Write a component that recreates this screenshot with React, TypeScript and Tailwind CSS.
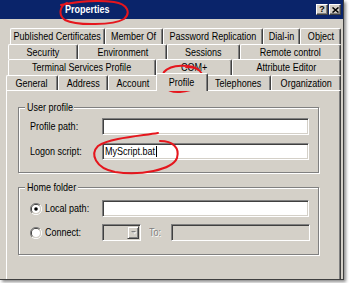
import React from "react";

type TabDef = { label: string; w: string; selected?: boolean };

const row1: TabDef[] = [
  { label: "Published Certificates", w: "w-[95px]" },
  { label: "Member Of", w: "w-[58px]" },
  { label: "Password Replication", w: "w-[100px]" },
  { label: "Dial-in", w: "w-[37px]" },
  { label: "Object", w: "w-[41px]" },
];
const row2: TabDef[] = [
  { label: "Security", w: "w-[70px]" },
  { label: "Environment", w: "w-[89px]" },
  { label: "Sessions", w: "w-[73px]" },
  { label: "Remote control", w: "w-[101px]" },
];
const row3: TabDef[] = [
  { label: "Terminal Services Profile", w: "w-[148px]" },
  { label: "COM+", w: "w-[76px]" },
  { label: "Attribute Editor", w: "w-[109px]" },
];
const row4: TabDef[] = [
  { label: "General", w: "w-[52px]" },
  { label: "Address", w: "w-[50px]" },
  { label: "Account", w: "w-[50px]" },
  { label: "Profile", w: "w-[52px]", selected: true },
  { label: "Telephones", w: "w-[65px]" },
  { label: "Organization", w: "w-[70px]" },
];

function N({ children, className = "" }: { children: React.ReactNode; className?: string }) {
  return <span className={`inline-block whitespace-nowrap scale-x-[0.82] ${className}`}>{children}</span>;
}

function Tab({ t }: { t: TabDef }) {
  if (t.selected) {
    return (
      <div
        className={`${t.w} relative z-10 -mx-[2px] -mt-[2px] flex h-[18px] shrink-0 items-start justify-center rounded-t-[2px] border-l border-t border-r border-white border-r-[#404040] bg-[#d4d0c8] pt-[1px] leading-[14px] shadow-[inset_-1px_0_#808080]`}
      >
        <N className="origin-center">{t.label}</N>
      </div>
    );
  }
  return (
    <div
      className={`${t.w} flex h-full shrink-0 items-start justify-center rounded-t-[2px] border-l border-t border-r border-white border-r-[#404040] bg-[#d4d0c8] leading-[14px] shadow-[inset_-1px_0_#808080]`}
    >
      <N className="origin-center">{t.label}</N>
    </div>
  );
}

function Input({ w, disabled, children }: { w: string; disabled?: boolean; children?: React.ReactNode }) {
  return (
    <div
      className={`${w} h-[17px] shrink-0 border border-[#808080] border-b-white border-r-white shadow-[inset_1px_1px_#404040,inset_-1px_-1px_#d4d0c8] ${disabled ? "bg-[#d4d0c8]" : "bg-white"} flex items-center pl-[2px] leading-none`}
    >
      {children}
    </div>
  );
}

function Radio({ checked }: { checked?: boolean }) {
  return (
    <svg width="12" height="12" viewBox="0 0 12 12" className="shrink-0">
      <path d="M10 2 A5.5 5.5 0 0 0 2 10" stroke="#808080" strokeWidth="1" fill="none" />
      <path d="M9.3 2.7 A4.5 4.5 0 0 0 2.7 9.3" stroke="#404040" strokeWidth="1" fill="none" />
      <path d="M2 10 A5.5 5.5 0 0 0 10 2" stroke="#ffffff" strokeWidth="1" fill="none" />
      <circle cx="6" cy="6" r="4" fill="#ffffff" />
      <path d="M9.3 2.7 A4.5 4.5 0 0 1 2.7 9.3" stroke="#d4d0c8" strokeWidth="1" fill="none" />
      {checked && <circle cx="6" cy="6" r="1.8" fill="#000" />}
    </svg>
  );
}

export default function App() {
  return (
    <div className="relative h-[283px] w-[349px] overflow-hidden bg-white font-['Liberation_Sans',Arial,sans-serif] text-[11px] text-black">
      <div className="flex h-[280px] w-[344px] flex-col overflow-hidden border-b border-r border-[#404040] bg-[#d4d0c8] shadow-[2px_2px_3px_rgba(0,0,0,0.45)]">
        {/* Title bar */}
        <div className="flex h-[19px] shrink-0 items-center bg-[#0a246a] pl-[65px] pr-[2px]">
          <N className="origin-left font-bold text-white leading-none">Properties</N>
          <div className="ml-auto flex gap-[1px]">
            <div className="flex h-[11px] w-[12px] items-center justify-center border border-white border-b-[#404040] border-r-[#404040] bg-[#d4d0c8] shadow-[inset_-1px_-1px_#808080] text-[9px] font-bold leading-none">
              ?
            </div>
            <div className="flex h-[11px] w-[12px] items-center justify-center border border-white border-b-[#404040] border-r-[#404040] bg-[#d4d0c8] shadow-[inset_-1px_-1px_#808080]">
              <svg width="7" height="6" viewBox="0 0 7 6">
                <path d="M0.5 0.5 L6.5 5.5 M6.5 0.5 L0.5 5.5" stroke="#000" strokeWidth="1.5" />
              </svg>
            </div>
          </div>
        </div>

        {/* Tabs */}
        <div className="mt-[9px] flex flex-1 flex-col pl-[6px] pr-[2px]">
          <div className="ml-[4px] flex h-[16px] shrink-0">
            {row1.map((t) => (
              <Tab key={t.label} t={t} />
            ))}
          </div>
          <div className="ml-[2px] flex h-[15px] shrink-0">
            {row2.map((t) => (
              <Tab key={t.label} t={t} />
            ))}
          </div>
          <div className="ml-[2px] flex h-[16px] shrink-0">
            {row3.map((t) => (
              <Tab key={t.label} t={t} />
            ))}
          </div>
          <div className="flex h-[15px] shrink-0">
            {row4.map((t) => (
              <Tab key={t.label} t={t} />
            ))}
          </div>

          {/* Page */}
          <div className="flex-1 border-l border-t border-r border-white border-r-[#404040] pl-[11px] pt-[16px] shadow-[inset_-1px_0_#808080]">
            {/* User profile */}
            <div className="relative h-[66px] w-[301px] border border-[#808080] pl-[11px] pt-[10px] shadow-[inset_1px_1px_#fff,1px_1px_#fff]">
              <span className="absolute -top-[7px] left-[6px] w-[49px] bg-[#d4d0c8] pl-[2px] leading-[13px]">
                <N className="origin-left">User profile</N>
              </span>
              <div className="flex flex-col gap-[8px]">
                <div className="flex h-[17px] items-center">
                  <span className="w-[72px]">
                    <N className="origin-left">Profile path:</N>
                  </span>
                  <Input w="w-[207px]" />
                </div>
                <div className="flex h-[17px] items-center">
                  <span className="w-[72px]">
                    <N className="origin-left">Logon script:</N>
                  </span>
                  <Input w="w-[207px]">
                    <span className="flex w-[52px] items-center">
                      <N className="origin-left">MyScript.bat</N>
                    </span>
                    <span className="-ml-[1px] inline-block h-[11px] w-[1px] bg-black" />
                  </Input>
                </div>
              </div>
            </div>

            {/* Home folder */}
            <div className="relative mt-[14px] h-[68px] w-[301px] border border-[#808080] pl-[11px] pt-[12px] shadow-[inset_1px_1px_#fff,1px_1px_#fff]">
              <span className="absolute -top-[7px] left-[6px] w-[53px] bg-[#d4d0c8] pl-[2px] leading-[13px]">
                <N className="origin-left">Home folder</N>
              </span>
              <div className="flex flex-col gap-[7px]">
                <div className="flex h-[17px] items-center">
                  <Radio checked />
                  <span className="ml-[3px] w-[57px]">
                    <N className="origin-left">Local path:</N>
                  </span>
                  <Input w="w-[207px]" />
                </div>
                <div className="flex h-[17px] items-center">
                  <Radio />
                  <span className="ml-[3px] w-[57px]">
                    <N className="origin-left">Connect:</N>
                  </span>
                  <div className="flex h-[17px] w-[39px] shrink-0 items-center justify-end border border-[#808080] border-b-white border-r-white bg-[#d4d0c8] pr-[1px] shadow-[inset_1px_1px_#404040,inset_-1px_-1px_#d4d0c8]">
                    <div className="flex h-[13px] w-[12px] items-center justify-center border border-[#d4d0c8] border-b-[#404040] border-r-[#404040] bg-[#d4d0c8] shadow-[inset_1px_1px_#fff,inset_-1px_-1px_#808080]">
                      <svg width="7" height="5" viewBox="0 0 7 5">
                        <path d="M1 1 L6 1 L3.5 3.5 Z" fill="#808080" />
                        <path d="M2 2 L7 2 L4.5 4.5 Z" fill="#ffffff" opacity="0.6" />
                      </svg>
                    </div>
                  </div>
                  <span className="ml-[8px] w-[22px] text-[#808080] [text-shadow:1px_1px_0_#fff]">
                    <N className="origin-left">To:</N>
                  </span>
                  <Input w="w-[139px]" disabled />
                </div>
              </div>
            </div>
          </div>
        </div>
      </div>

      {/* Red annotations */}
      <svg className="pointer-events-none absolute left-0 top-0" width="349" height="283" viewBox="0 0 349 283">
        <g fill="none" stroke="#e5161d" strokeWidth="2" strokeLinecap="round" strokeLinejoin="round">
          <path d="M67 3 C61 5, 57 14, 65 20 C77 26, 114 25, 124 19 C131 13, 128 4, 114 2 C98 0, 80 1, 61 5" />
          <path d="M199 70 C191 64, 171 64, 164 72 C158 82, 165 93, 180 92 C193 91, 204 86, 203 77 C202 71, 196 67, 186 67" />
          <path d="M158 133 C140 136, 110 138, 98 146 C90 154, 95 168, 115 172 C140 176, 172 170, 177 158 C180 148, 173 141, 160 141" />
        </g>
      </svg>
    </div>
  );
}
